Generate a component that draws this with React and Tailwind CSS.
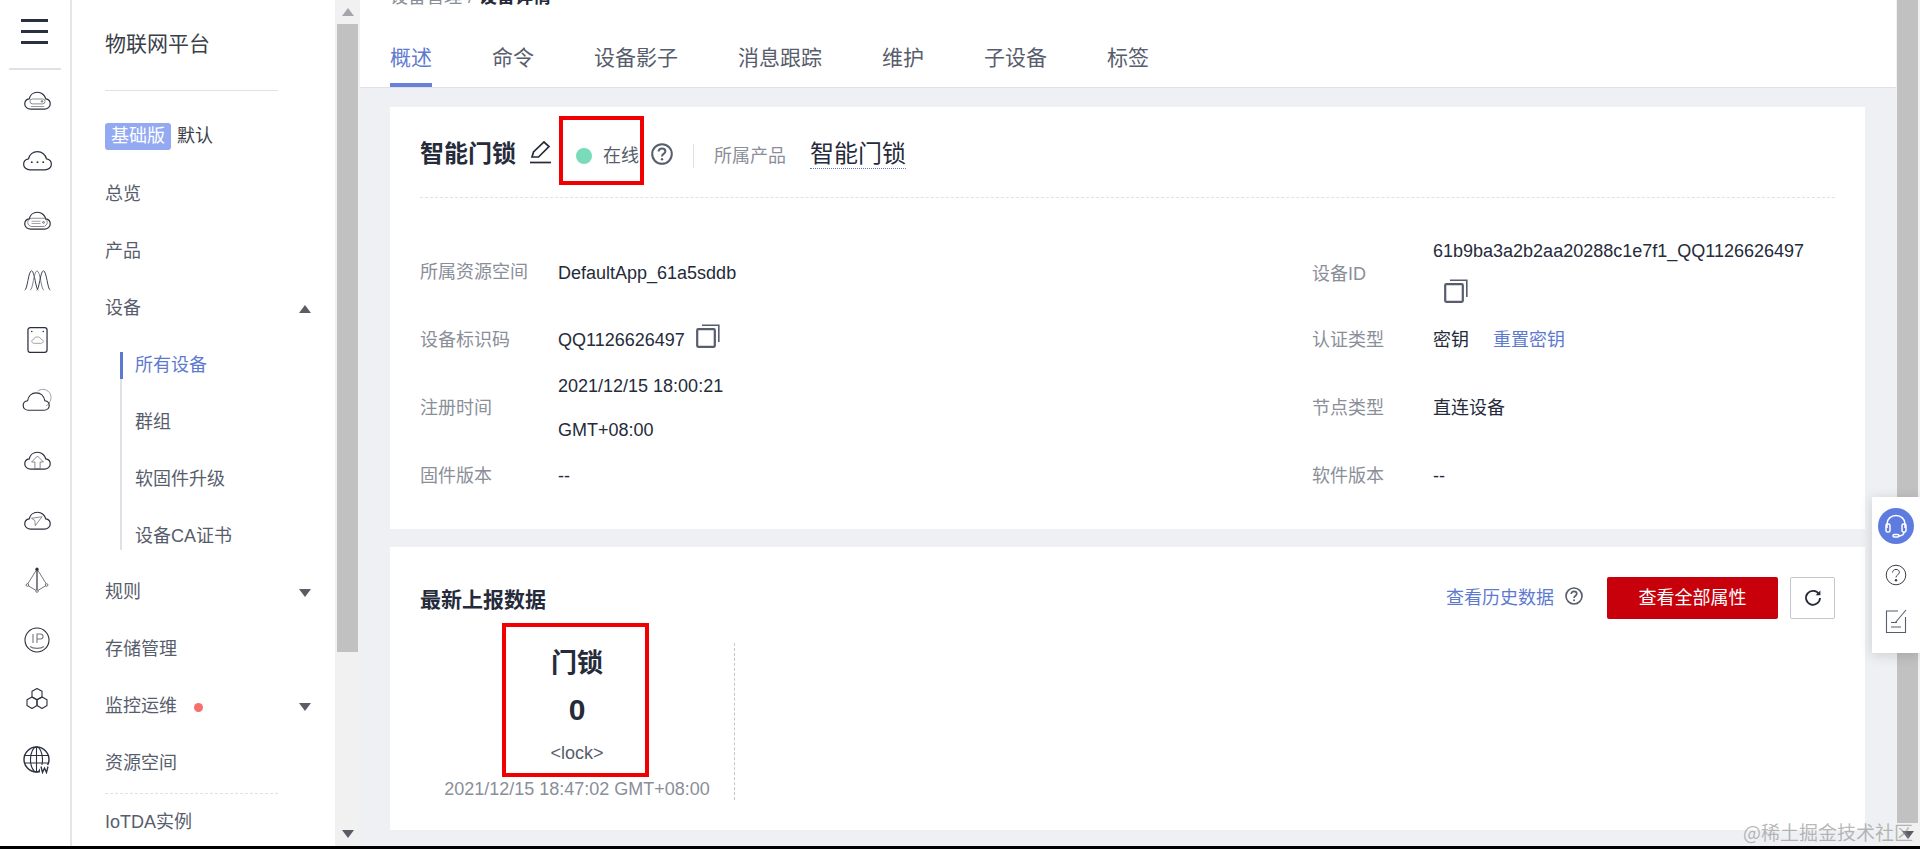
import React from "react";

const cloudPath = "M10 25.5C5.5 25.5 2 22.5 2 18.5C2 15 4.6 12.4 8 11.9C9 7 13.2 3 19 3C24.5 3 29 7 30 11.9C33.4 12.4 36 15 36 18.5C36 22.5 32.5 25.5 28 25.5Z";

function Cloud({ children, stroke = "#2b3040" }) {
  return (
    <svg width="29" height="21" viewBox="0 0 38 28" fill="none" stroke={stroke} strokeWidth="1.6">
      <path d={cloudPath} />
      {children}
    </svg>
  );
}

const railIcons = [
  <Cloud key="a">
    <rect x="9" y="12" width="20" height="6.5" rx="3.2" stroke="#666" strokeWidth="1" />
    <circle cx="25" cy="15.2" r="1" strokeWidth="0.9" />
    <path d="M10 22H28" strokeWidth="1" stroke="#777" />
  </Cloud>,
  <svg key="b" width="31" height="23" viewBox="0 0 38 28" fill="none" stroke="#2b3040" strokeWidth="1.5">
    <path d={cloudPath} />
    <circle cx="12" cy="16" r="1.2" fill="#2b3040" stroke="none" />
    <circle cx="19" cy="16" r="1.2" fill="#2b3040" stroke="none" />
    <circle cx="26" cy="16" r="1.2" fill="#2b3040" stroke="none" />
  </svg>,
  <Cloud key="c">
    <rect x="6" y="11" width="26" height="11" rx="5.5" stroke="#666" strokeWidth="1" />
    <path d="M11 15H23M11 18H23" stroke="#777" strokeWidth="0.9" />
    <circle cx="27" cy="16.5" r="1.2" strokeWidth="0.9" />
  </Cloud>,
  <svg key="d" width="29" height="22" viewBox="0 0 30 24" fill="none" stroke="#2b3040" strokeWidth="1">
    <path d="M1 23C4 23 5 2 8.5 2C12 2 13 23 16 23" />
    <path d="M7 23C10 23 11 2 14.5 2C18 2 19 23 22 23" stroke="#777" />
    <path d="M14 23C17 23 18 2 21.5 2C25 2 26 23 29 23" />
  </svg>,
  <svg key="e" width="21" height="28" viewBox="0 0 22 28" fill="none" stroke="#2b3040" strokeWidth="1.3">
    <rect x="1" y="1" width="20" height="26" rx="2.5" />
    <circle cx="5" cy="5" r="0.8" fill="#2b3040" stroke="none" />
    <circle cx="17" cy="5" r="0.8" fill="#2b3040" stroke="none" />
    <path d="M7.5 17.5C5.8 17.5 5 16.4 5 15.3C5 14.2 5.9 13.4 7 13.3C7.3 11.8 8.8 10.8 10.8 10.8C12.8 10.8 14.4 11.8 14.8 13.3C16 13.4 17 14.2 17 15.3C17 16.4 16 17.5 14.5 17.5Z" stroke="#888" strokeWidth="0.8" />
  </svg>,
  <svg key="f" width="30" height="24" viewBox="0 0 38 30" fill="none" stroke="#2b3040" strokeWidth="1.5">
    <path d="M20 4C23 0.8 29 0.6 33 3.8C37.5 7.5 38 14 34 19.5C33 21 31.5 22 30.5 22.5" stroke="#888" strokeWidth="1" />
    <path d="M8 28C4.5 28 1.5 25.5 1.5 22C1.5 18.8 3.8 16.5 7 16C8 10.5 12 6 18 6C24 6 28 10.5 29 16C32.2 16.5 34.5 18.8 34.5 22C34.5 25.5 31.5 28 28 28Z" />
  </svg>,
  <Cloud key="g">
    <path d="M11 16L19 8L27 16H22.5V25H15.5V16Z" stroke="#666" strokeWidth="1" />
  </Cloud>,
  <Cloud key="h">
    <path d="M11 11L25 9L16 21L15.5 14Z" stroke="#666" strokeWidth="1" />
  </Cloud>,
  <svg key="i" width="24" height="26" viewBox="0 0 24 26" fill="none" stroke="#666" strokeWidth="0.9">
    <path d="M12 2L2 18L12 24L22 18Z" />
    <path d="M12 2V24" stroke="#2b3040" strokeWidth="1.2" />
    <circle cx="12" cy="2.2" r="1.6" fill="#2b3040" stroke="none" />
    <circle cx="2.4" cy="18" r="1.3" fill="#fff" />
    <circle cx="21.6" cy="18" r="1.3" fill="#fff" />
    <circle cx="12" cy="24" r="1.3" fill="#fff" />
  </svg>,
  <svg key="j" width="26" height="26" viewBox="0 0 26 26" fill="none" stroke="#2b3040" strokeWidth="1.1">
    <circle cx="13" cy="13" r="12" />
    <path d="M9 7V16M13 16V7H16.5C18.2 7 19 8.2 19 9.5C19 10.8 18.2 12 16.5 12H13" stroke="#777" />
    <path d="M6 19.5C9 22 17 22 20 19.5" stroke="#777" />
  </svg>,
  <svg key="k" width="26" height="26" viewBox="0 0 26 26" fill="none" stroke="#2b3040" strokeWidth="1.1" strokeLinejoin="round">
    <path d="M13 1.5L18 4.3V10L13 12.8L8 10V4.3Z" />
    <path d="M8 10L13 12.8V18.5L8 21.5L3 18.5V12.8Z" />
    <path d="M18 10L23 12.8V18.5L18 21.5L13 18.5V12.8Z" />
  </svg>,
  <svg key="l" width="28" height="28" viewBox="0 0 28 28" fill="none" stroke="#2b3040" strokeWidth="1.1">
    <circle cx="13.5" cy="13.5" r="12.5" strokeWidth="1.4" />
    <ellipse cx="13.5" cy="13.5" rx="6" ry="12.5" />
    <path d="M13.5 1V26M1.5 9.5H25.5M1.5 17H25.5" />
    <rect x="17" y="19" width="11" height="9" fill="#fff" stroke="none" />
    <path d="M18 20.5L19.5 26.5L21.5 22L23.5 26.5L25 20.5" strokeWidth="1.3" />
  </svg>,
];

function Caret({ up, className = "" }) {
  return (
    <svg width="12" height="8" viewBox="0 0 12 8" className={className} fill="#5a5d66">
      {up ? <path d="M6 0L12 8H0Z" /> : <path d="M0 0H12L6 8Z" />}
    </svg>
  );
}

function Help({ size = 22, color = "#575d6c", width = 2 }) {
  return (
    <svg width={size} height={size} viewBox="0 0 22 22" fill="none" stroke={color} strokeWidth={width}>
      <circle cx="11" cy="11" r="9.8" />
      <path d="M7.6 8.6C7.6 6.6 9.1 5.4 11 5.4C12.9 5.4 14.4 6.6 14.4 8.4C14.4 10.6 11 10.8 11 13.4" />
      <circle cx="11" cy="16.2" r="1.2" fill={color} stroke="none" />
    </svg>
  );
}

function Copy({ className = "" }) {
  return (
    <svg width="24" height="24" viewBox="0 0 24 24" fill="none" stroke="#575d6c" strokeWidth="2.2" className={className}>
      <rect x="1.2" y="5.2" width="17.6" height="17.6" rx="1" />
      <path d="M6 1.2H22.8V18" strokeWidth="1.6" />
    </svg>
  );
}

function Row({ label, children, h = "h-[68px]" }) {
  return (
    <div className={`flex items-center ${h}`}>
      <div className="w-[138px] shrink-0 text-[18px] text-[#8a8e99]">{label}</div>
      <div className="text-[18px] text-[#252b3a] leading-[44px]">{children}</div>
    </div>
  );
}

function Item({ children, caret, dot }) {
  return (
    <div className="flex items-center shrink-0 h-[57px] pl-[33px] pr-[24px] text-[18px] text-[#575d6c]">
      <span>{children}</span>
      {dot && <span className="ml-[17px] mt-[2px] w-[9px] h-[9px] rounded-full bg-[#f66f6a]" />}
      {caret && <Caret up={caret === "up"} className="ml-auto" />}
    </div>
  );
}

function SubItem({ children, active }) {
  return (
    <div className={`flex items-center h-[27px] pl-[13px] text-[18px] ${active ? "text-[#5e7ad0]" : "text-[#575d6c]"}`}>
      {children}
    </div>
  );
}

export default function App() {
  return (
    <div
      className="relative w-[1920px] h-[849px] overflow-hidden flex flex-col bg-white"
      style={{ fontFamily: '"Liberation Sans", "Noto Sans CJK SC", sans-serif' }}
    >
      <div className="flex flex-1 min-h-0">
        {/* icon rail */}
        <aside className="w-[72px] shrink-0 border-r-2 border-[#e5e6e8] flex flex-col items-stretch">
          <div className="h-[70px] shrink-0 mx-[9px] border-b-2 border-[#dfe1e6] flex flex-col pt-[19px] pl-[12px] gap-[8px]">
            <span className="block w-[27px] h-[3px] bg-[#2b3040]" />
            <span className="block w-[27px] h-[3px] bg-[#2b3040]" />
            <span className="block w-[27px] h-[3px] bg-[#2b3040]" />
          </div>
          <div className="flex flex-col items-center pl-[4px]">
            {railIcons.map((icon) => (
              <div key={icon.key} className="h-[60px] w-full flex items-center justify-center">
                {icon}
              </div>
            ))}
          </div>
        </aside>

        {/* menu */}
        <nav className="w-[263px] shrink-0 flex flex-col overflow-hidden">
          <div className="h-[91px] w-[173px] shrink-0 ml-[33px] border-b border-[#dfe1e6] pt-[30px] text-[21px] text-[#3b3f4a] leading-[28px]">
            物联网平台
          </div>
          <div className="h-[75px] shrink-0 pl-[33px] pt-[32px] flex items-start text-[18px] text-[#3b3f4a]">
            <span className="h-[27px] px-[6px] rounded-[3px] bg-[#93aaf3] text-white leading-[27px]">基础版</span>
            <span className="ml-[6px] leading-[27px]">默认</span>
          </div>
          <Item>总览</Item>
          <Item>产品</Item>
          <Item caret="up">设备</Item>
          <div className="relative shrink-0 ml-[48px] mt-[15px] mb-[14px] border-l-2 border-[#dfe1e6] flex flex-col gap-[30px]">
            <span className="absolute -left-[2px] top-0 w-[3px] h-[27px] bg-[#5e7ad0]" />
            <SubItem active>所有设备</SubItem>
            <SubItem>群组</SubItem>
            <SubItem>软固件升级</SubItem>
            <SubItem>设备CA证书</SubItem>
          </div>
          <Item caret="down">规则</Item>
          <Item>存储管理</Item>
          <Item caret="down" dot>监控运维</Item>
          <Item>资源空间</Item>
          <div className="w-[173px] ml-[33px] mt-[1px] shrink-0 border-t border-dashed border-[#dfe1e6]" />
          <Item>IoTDA实例</Item>
        </nav>

        {/* menu scrollbar */}
        <div className="w-[25px] shrink-0 bg-[#f1f1f1] flex flex-col items-center">
          <div className="h-[24px] flex items-center justify-center"><Caret up className="opacity-50" /></div>
          <div className="w-[21px] h-[628px] bg-[#c1c1c1]" />
          <div className="mt-auto h-[24px] flex items-center justify-center"><Caret /></div>
        </div>

        {/* main */}
        <main className="flex-1 min-w-0 bg-[#eef0f3] flex flex-col overflow-hidden">
          <header className="h-[88px] bg-white border-b border-[#dfe1e6] shrink-0 pl-[30px] overflow-hidden">
            <div className="h-[6px] flex items-end text-[18px] leading-[26px] text-[#8a8e99] whitespace-nowrap">
              <span className="mb-[-4px]">设备管理<span className="mx-[1px]"> / </span><b className="text-[#252b3a]">设备详情</b></span>
            </div>
            <div className="flex gap-[60px] mt-[38px] text-[21px] leading-[28px] text-[#575d6c]">
              <span className="relative text-[#5e7ad0]">
                概述
                <span className="absolute left-0 right-0 top-[39px] h-[4px] bg-[#6880d8]" />
              </span>
              <span>命令</span>
              <span>设备影子</span>
              <span>消息跟踪</span>
              <span>维护</span>
              <span>子设备</span>
              <span>标签</span>
            </div>
          </header>

          <div className="pl-[30px] pr-[31px] pt-[19px] flex flex-col gap-[18px]">
            <section className="bg-white h-[422px] px-[30px]">
              <div className="h-[91px] pt-[8px] border-b border-dashed border-[#dfe1e6] flex items-center">
                <h2 className="text-[24px] font-bold text-[#252b3a] leading-[32px] mt-[-4px]">智能门锁</h2>
                <svg width="24" height="24" viewBox="0 0 24 24" fill="none" stroke="#252b3a" strokeWidth="1.7" className="ml-[13px] mt-[-9px]">
                  <path d="M3 17L4.5 12L15 2L20 6.5L9.5 17Z" />
                  <path d="M1 22.5H22" />
                </svg>
                <span className="ml-[23px] w-[16px] h-[16px] rounded-full bg-[#7adbbb]" />
                <span className="ml-[11px] text-[18px] text-[#575d6c]">在线</span>
                <span className="ml-[12px] mt-[-4px] flex"><Help /></span>
                <span className="ml-[20px] w-[1px] h-[24px] bg-[#dfe1e6]" />
                <span className="ml-[20px] text-[18px] text-[#8a8e99]">所属产品</span>
                <span className="ml-[24px] mt-[-4px] text-[24px] leading-[28px] text-[#252b3a] border-b border-dotted border-[#5e7ad0]">智能门锁</span>
              </div>
              <div className="grid grid-cols-[892px_1fr] mt-[41px]">
                <div className="flex flex-col">
                  <Row label="所属资源空间" h="h-[67px]">DefaultApp_61a5sddb</Row>
                  <Row label="设备标识码">
                    <span className="flex items-center">QQ1126626497<Copy className="ml-[11px] mt-[-8px]" /></span>
                  </Row>
                  <Row label="注册时间">
                    <span className="block w-[200px]">2021/12/15 18:00:21 GMT+08:00</span>
                  </Row>
                  <Row label="固件版本">--</Row>
                </div>
                <div className="flex flex-col">
                  <div className="flex items-center h-[67px]">
                    <div className="w-[121px] shrink-0 text-[18px] text-[#8a8e99] mt-[3px]">设备ID</div>
                    <div className="text-[18px] text-[#252b3a] leading-[44px]">
                      <div className="whitespace-nowrap">61b9ba3a2b2aa20288c1e7f1_QQ1126626497</div>
                      <div className="h-[44px] flex items-center pl-[11px]"><Copy className="mb-[8px]" /></div>
                    </div>
                  </div>
                  <div className="flex items-center h-[68px] text-[18px]">
                    <div className="w-[121px] shrink-0 text-[#8a8e99]">认证类型</div>
                    <span className="text-[#252b3a]">密钥</span>
                    <span className="ml-[24px] text-[#5e7ad0]">重置密钥</span>
                  </div>
                  <div className="flex items-center h-[68px] text-[18px]">
                    <div className="w-[121px] shrink-0 text-[#8a8e99]">节点类型</div>
                    <span className="text-[#252b3a]">直连设备</span>
                  </div>
                  <div className="flex items-center h-[68px] text-[18px]">
                    <div className="w-[121px] shrink-0 text-[#8a8e99]">软件版本</div>
                    <span className="text-[#252b3a]">--</span>
                  </div>
                </div>
              </div>
            </section>

            <section className="bg-white h-[283px] px-[30px] flow-root">
              <div className="flex items-center h-[42px] mt-[30px]">
                <h3 className="text-[21px] font-bold text-[#252b3a] mt-[4px]">最新上报数据</h3>
                <span className="ml-auto text-[18px] text-[#5e7ad0]">查看历史数据</span>
                <span className="ml-[11px] mt-[-4px] flex"><Help size={18} /></span>
                <button className="ml-[24px] w-[171px] h-[42px] rounded-[2px] bg-[#c7000b] text-white text-[18px]">查看全部属性</button>
                <button className="ml-[12px] w-[45px] h-[42px] rounded-[2px] border border-[#c4c6cc] flex items-center justify-center">
                  <svg width="18" height="18" viewBox="0 0 18 18" fill="none" stroke="#252b3a" strokeWidth="1.8">
                    <path d="M15 5.2A7 7 0 1 0 16 9" />
                    <path d="M16.4 1.5L16.4 6.2L11.6 6.2Z" fill="#252b3a" stroke="none" />
                  </svg>
                </button>
              </div>
              <div className="mt-[24px] w-[315px] h-[157px] border-r border-dashed border-[#c4c6cc] text-center">
                <div className="text-[26px] font-bold text-[#252b3a] leading-[36px] pt-[2px]">门锁</div>
                <div className="text-[30px] font-bold text-[#252b3a] leading-[36px] mt-[11px]">0</div>
                <div className="text-[18px] text-[#575d6c] leading-[24px] mt-[13px]">&lt;lock&gt;</div>
                <div className="text-[18px] text-[#8a8e99] leading-[24px] mt-[12px] whitespace-nowrap">2021/12/15 18:47:02 GMT+08:00</div>
              </div>
            </section>
          </div>
        </main>

        {/* page scrollbar */}
        <div className="w-[24px] shrink-0 bg-[#f1f1f1] flex flex-col pl-[1px]">
          <div className="w-[21px] h-[823px] shrink-0 bg-[#c1c1c1]" />
          <div className="h-[23px] w-[21px] flex items-center justify-center"><Caret /></div>
        </div>
      </div>

      <div className="h-[3px] bg-black shrink-0" />

      {/* floating help rail */}
      <div className="absolute left-[1872px] top-[497px] w-[48px] h-[156px] bg-white shadow-[0_2px_12px_rgba(0,0,0,0.15)] flex flex-col items-center pt-[11px]">
        <div className="w-[36px] h-[36px] rounded-full bg-[#5e7ce0] flex items-center justify-center">
          <svg width="26" height="26" viewBox="0 0 26 26" fill="none" stroke="#fff" strokeWidth="1.5">
            <path d="M4 15V11C4 6 8 2.5 13 2.5C18 2.5 22 6 22 11V15" />
            <rect x="3" y="11" width="4" height="8" rx="1.6" />
            <rect x="19" y="11" width="4" height="8" rx="1.6" />
            <path d="M21 19C21 22 18 23 15 23" />
            <rect x="10" y="21.5" width="6" height="2.5" rx="1.2" />
          </svg>
        </div>
        <div className="mt-[20px] flex"><Help size={22} width={1} color="#3b3f4a" /></div>
        <div className="mt-[22px] flex">
          <svg width="22" height="26" viewBox="0 0 22 26" fill="none" stroke="#575d6c" strokeWidth="1.1">
            <path d="M13 3H1.5V24.5H20.5V9" />
            <path d="M10 15L21 2" />
            <path d="M6 14.5H12M6 19H16" />
          </svg>
        </div>
      </div>

      {/* red annotation boxes */}
      <div className="absolute left-[559px] top-[116px] w-[85px] h-[69px] border-[4px] border-[#f00000]" />
      <div className="absolute left-[502px] top-[623px] w-[147px] h-[154px] border-[4px] border-[#f00000]" />

      {/* watermark */}
      <div
        className="absolute right-[7px] bottom-[5px] text-[19px] leading-[24px] text-[#8a8a8a]/60 whitespace-nowrap"
        style={{ fontFamily: '"Noto Sans CJK SC", sans-serif' }}
      >
        @稀土掘金技术社区
      </div>
    </div>
  );
}
